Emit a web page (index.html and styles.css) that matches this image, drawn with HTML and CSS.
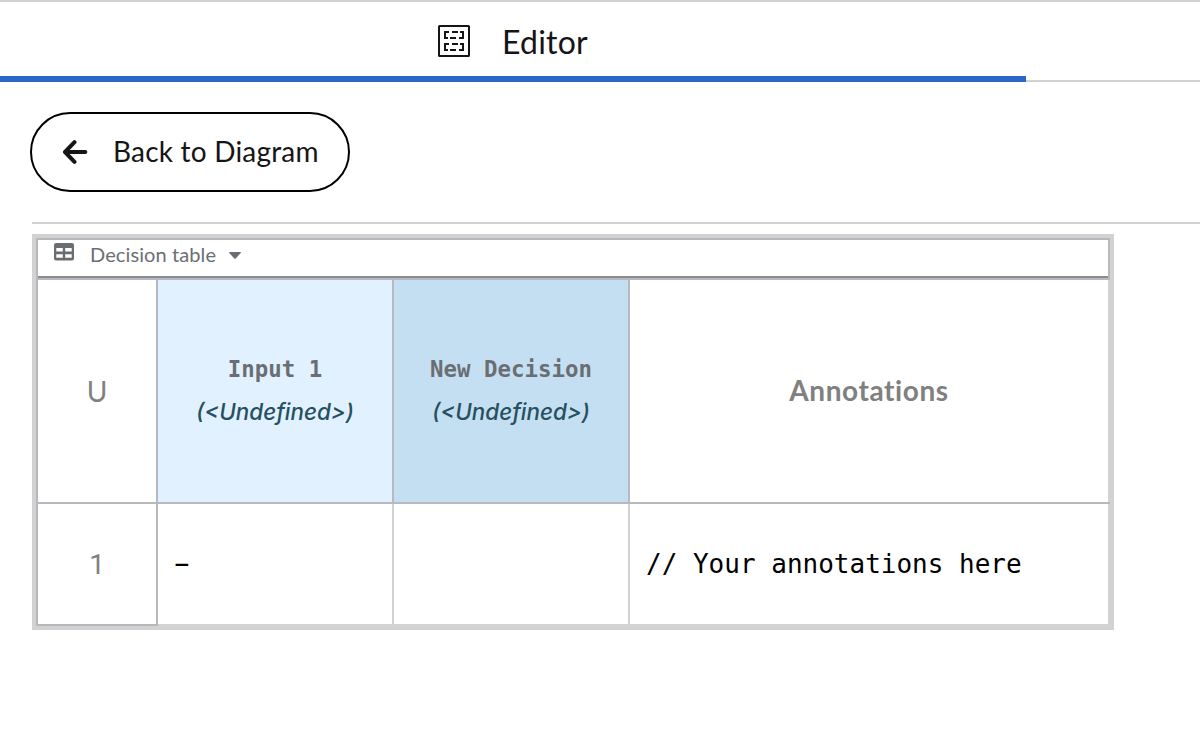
FILE: index.html
```html
<!DOCTYPE html>
<html lang="en">
<head>
<meta charset="utf-8">
<title>Decision table editor</title>
<link rel="stylesheet" href="styles.css">
</head>
<body>
<nav class="tabs">
  <div class="tab">
    <svg class="tab-icon" width="32" height="32" viewBox="0 0 32 32" fill="none" stroke="#151515" stroke-width="2">
      <rect x="1" y="1" width="30" height="30" rx="0.6"/>
      <path d="M11 7H7v6h3M22 7h3v6h-4M11 19H7v6h3M22 19h3v6h-4M14 7h6M12 13h6M14 19h6M12 25h6"/>
    </svg>
    <span class="tab-label">Editor</span>
  </div>
</nav>
<main class="content">
  <button class="back">
    <svg class="back-icon" width="26" height="24" viewBox="0 0 26 24" fill="none" stroke="#151515" stroke-width="4" stroke-linecap="round" stroke-linejoin="round"><path d="M12.500 2.200L3 12l9.500 9.800"/><path d="M4 12H23.300"/></svg>
    <span class="back-label">Back to Diagram</span>
  </button>
  <section class="expression">
    <div class="frame">
      <div class="toolbar">
        <svg class="table-icon" width="20" height="18" viewBox="0 0 20 18"><path fill="#6a6e73" fill-rule="evenodd" d="M2 0h16a2 2 0 0 1 2 2v13.500a2 2 0 0 1-2 2H2a2 2 0 0 1-2-2V2a2 2 0 0 1 2-2zM2.300 5v3.600h6.500V5zM11.200 5v3.600h6.500V5zM2.300 11.200v3.600h6.500v-3.600zM11.200 11.200v3.600h6.500v-3.600z"/></svg>
        <span class="toolbar-label">Decision table</span>
        <svg class="caret" width="12" height="7" viewBox="0 0 12 7"><path fill="#6a6e73" d="M.6 0h10.800q.9.200.3 1L6.700 6.400q-.7.700-1.400 0L.3 1Q-.3.200.6 0z"/></svg>
      </div>
      <div class="row head">
        <div class="cell index">U</div>
        <div class="cell input"><span class="name">Input 1</span><span class="type">(&lt;Undefined&gt;)</span></div>
        <div class="cell output"><span class="name">New Decision</span><span class="type">(&lt;Undefined&gt;)</span></div>
        <div class="cell note"><span class="note-title">Annotations</span></div>
      </div>
      <div class="row body">
        <div class="cell index number">1</div>
        <div class="cell value"><span class="dash">-</span></div>
        <div class="cell value"></div>
        <div class="cell value">// Your annotations here</div>
      </div>
    </div>
  </section>
</main>
</body>
</html>
```
FILE: styles.css
```css
* { box-sizing: border-box; }
body { margin: 0; background: #fff; color: #151515; font-family: Lato, "Open Sans", sans-serif; font-variant-ligatures: none; overflow: hidden; }
.tabs { height: 82px; border-top: 2px solid #d2d2d2; background: linear-gradient(#d2d2d2, #d2d2d2) bottom / 100% 2px no-repeat; }
.tab { width: 1026px; height: 80px; border-bottom: 6px solid #2b66c8; display: flex; align-items: center; justify-content: center; gap: 32px; padding-top: 4px; }
.tab-label { padding-top: 1px; font-size: 32px; line-height: 38px; letter-spacing: 0.2px; }
.content { padding: 30px 0 0 30px; }
.back { display: flex; align-items: center; width: 320px; height: 80px; padding: 0 0 0 30px; gap: 25px; border: 2px solid #000; border-radius: 40px; background: #fff; color: #151515; font-family: inherit; }
.back-label { padding-bottom: 2px; font-size: 28px; line-height: 36px; letter-spacing: 0.2px; white-space: nowrap; }
.expression { margin: 30px 0 0 2px; border-top: 2px solid #d2d2d2; padding-top: 10px; }
.frame { width: 1082px; border: 4px solid #d2d2d2; }
.toolbar { height: 42px; border: 2px solid #b8b9be; box-shadow: inset 0 -2px #8a8d90; display: flex; align-items: flex-start; padding: 3px 0 0 16px; color: #6a6e73; }
.toolbar-label { margin: 0 13px 0 16px; font-size: 20px; line-height: 22px; letter-spacing: 0.1px; }
.caret { margin-top: 9px; }
.row { display: grid; grid-template-columns: 122px 236px 236px 480px; }
.head { height: 224px; border-bottom: 2px solid #b8b9be; }
.body { height: 122px; }
.cell { display: flex; align-items: center; justify-content: center; border-right: 2px solid #b8b9be; }
.index { border-left: 2px solid #b8b9be; color: #808080; font-size: 28px; }
.number { border-bottom: 2px solid #b8b9be; font-family: Roboto, sans-serif; }
.input, .output { flex-direction: column; gap: 13px; }
.input { background: #e1f1ff; }
.output { background: #c5dff2; }
.name { font: bold 22.4px/30px "DejaVu Sans Mono", monospace; color: #6a6e73; }
.input, .output { padding-bottom: 1px; }
.type { font: italic 500 22.4px/30px Inter, sans-serif; color: #26505e; }
.note { border-color: #d2d2d2; }
.note-title { padding-bottom: 2px; font-size: 28px; font-weight: bold; letter-spacing: 0.6px; color: #808080; }
.value { justify-content: flex-start; padding-left: 16px; border-right-color: #d2d2d2; border-bottom: 2px solid #d2d2d2; font: 26px/34px "DejaVu Sans Mono", monospace; color: #000; }
.dash { display: inline-block; transform: translateY(-1px) scaleX(1.9); }
```
